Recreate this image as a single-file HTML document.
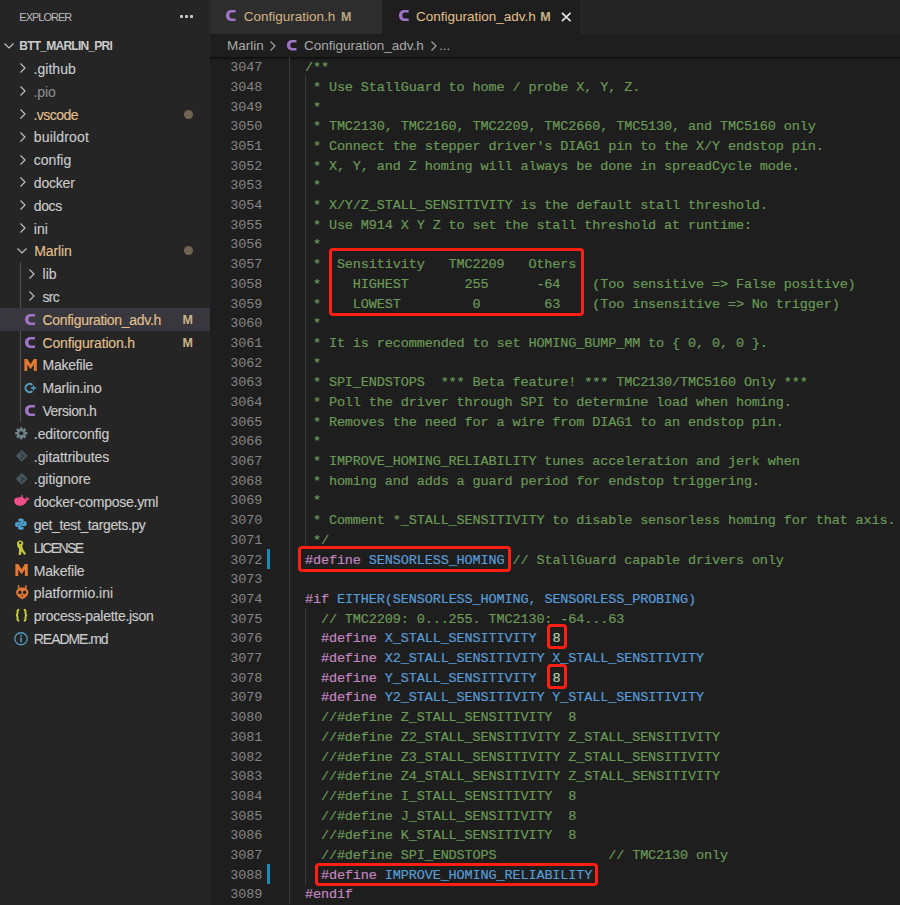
<!DOCTYPE html>
<html><head><meta charset="utf-8"><style>
html,body{margin:0;padding:0;}
body{width:900px;height:905px;overflow:hidden;background:#1e1e1e;position:relative;font-family:"Liberation Sans",sans-serif;}
.sb{position:absolute;left:0;top:0;width:210px;height:905px;background:#252526;overflow:hidden;}
.st{position:absolute;white-space:pre;font-size:14px;-webkit-text-stroke:0.12px currentColor;}
.ic{position:absolute;overflow:visible;}
.ci{position:absolute;width:12px;height:18px;line-height:18px;font-size:14px;font-weight:bold;color:#a074c4;text-align:center;}
.ji{position:absolute;width:14px;height:18px;line-height:18px;font-size:12.5px;font-weight:bold;color:#cbcb41;text-align:center;white-space:pre;}
.sel{position:absolute;left:0;width:210px;background:#37373d;}
.dot{position:absolute;left:183.8px;width:9px;height:9px;border-radius:50%;background:#716552;}
.mm{position:absolute;left:182.6px;font-size:12.5px;font-weight:bold;color:#cdb287;padding-top:1px;}
.tg{position:absolute;left:19.5px;width:1.4px;background:#505050;}
.hdr{position:absolute;left:19.3px;top:11px;font-size:11px;line-height:12px;color:#bbbbbb;letter-spacing:-1.0px;}
.root{position:absolute;left:19.3px;top:34.20px;height:22.80px;line-height:22.80px;font-size:12px;font-weight:bold;color:#cccccc;letter-spacing:-0.76px;padding-top:1px;}
.tabs{position:absolute;left:210px;top:0;width:690px;height:34px;background:#252526;}
.tab{position:absolute;top:0;height:34px;}
.tt{position:absolute;top:0;height:34px;line-height:34px;font-size:13.5px;white-space:pre;}
.bc{position:absolute;left:210px;top:34px;width:690px;height:23px;background:#1e1e1e;}
.bct{position:absolute;top:0;height:23px;line-height:23px;font-size:13.5px;color:#a9a9a9;white-space:pre;}
.shadow{position:absolute;left:210px;top:56.5px;width:690px;height:3px;background:linear-gradient(#0d0d0d,rgba(0,0,0,0));}
.ed{position:absolute;left:210px;top:57px;width:690px;height:848px;background:#1e1e1e;}
.ln{position:absolute;left:210px;width:52.2px;text-align:right;height:19.695px;line-height:19.695px;font-family:"Liberation Mono",monospace;font-size:13.5px;letter-spacing:-0.121px;color:#858585;white-space:pre;}
.cl{position:absolute;left:289.0px;height:19.695px;line-height:19.695px;font-family:"Liberation Mono",monospace;font-size:13.5px;letter-spacing:-0.121px;color:#d4d4d4;white-space:pre;-webkit-text-stroke:0.2px currentColor;}
.ig{position:absolute;width:1px;}
.gg{position:absolute;left:267px;width:3px;background:#1a8ab5;}
.rb{position:absolute;box-sizing:border-box;border:3.6px solid #ff1e12;border-radius:4px;}
</style></head><body>
<div class="sb">
<div class="hdr">EXPLORER</div>
<div style="position:absolute;left:179.9px;top:15px;width:2.8px;height:3px;border-radius:0.8px;background:#c5c5c5"></div>
<div style="position:absolute;left:185.1px;top:15px;width:2.8px;height:3px;border-radius:0.8px;background:#c5c5c5"></div>
<div style="position:absolute;left:190.35px;top:15px;width:2.8px;height:3px;border-radius:0.8px;background:#c5c5c5"></div>
<svg class="ic" style="left:2.5px;top:39.6px" width="12" height="12" viewBox="0 0 12 12"><path d="M1.5 3.5 L6 8 L10.5 3.5" fill="none" stroke="#c5c5c5" stroke-width="1.1"/></svg>
<div class="root">BTT_MARLIN_PRI</div>
<div class="tg" style="top:262.20px;height:159.60px"></div>
<svg class="ic" style="left:17px;top:62.400000000000006px" width="12" height="12" viewBox="0 0 12 12"><path d="M3.5 1.5 L8 6 L3.5 10.5" fill="none" stroke="#c5c5c5" stroke-width="1.1"/></svg><div class="st" style="left:33.5px;top:58.00px;height:22.80px;line-height:22.80px;color:#cccccc;letter-spacing:0.038px">.github</div><svg class="ic" style="left:17px;top:85.20000000000002px" width="12" height="12" viewBox="0 0 12 12"><path d="M3.5 1.5 L8 6 L3.5 10.5" fill="none" stroke="#c5c5c5" stroke-width="1.1"/></svg><div class="st" style="left:33.5px;top:80.80px;height:22.80px;line-height:22.80px;color:#8c8c8c;letter-spacing:-0.068px">.pio</div><svg class="ic" style="left:17px;top:108.00000000000001px" width="12" height="12" viewBox="0 0 12 12"><path d="M3.5 1.5 L8 6 L3.5 10.5" fill="none" stroke="#c5c5c5" stroke-width="1.1"/></svg><div class="st" style="left:33.5px;top:103.60px;height:22.80px;line-height:22.80px;color:#e2c08d;letter-spacing:-0.535px">.vscode</div><div class="dot" style="top:109.50px"></div><svg class="ic" style="left:17px;top:130.8px" width="12" height="12" viewBox="0 0 12 12"><path d="M3.5 1.5 L8 6 L3.5 10.5" fill="none" stroke="#c5c5c5" stroke-width="1.1"/></svg><div class="st" style="left:33.8px;top:126.40px;height:22.80px;line-height:22.80px;color:#cccccc;letter-spacing:0.177px">buildroot</div><svg class="ic" style="left:17px;top:153.6px" width="12" height="12" viewBox="0 0 12 12"><path d="M3.5 1.5 L8 6 L3.5 10.5" fill="none" stroke="#c5c5c5" stroke-width="1.1"/></svg><div class="st" style="left:33.8px;top:149.20px;height:22.80px;line-height:22.80px;color:#cccccc;letter-spacing:0.007px">config</div><svg class="ic" style="left:17px;top:176.4px" width="12" height="12" viewBox="0 0 12 12"><path d="M3.5 1.5 L8 6 L3.5 10.5" fill="none" stroke="#c5c5c5" stroke-width="1.1"/></svg><div class="st" style="left:33.8px;top:172.00px;height:22.80px;line-height:22.80px;color:#cccccc;letter-spacing:-0.187px">docker</div><svg class="ic" style="left:17px;top:199.20000000000002px" width="12" height="12" viewBox="0 0 12 12"><path d="M3.5 1.5 L8 6 L3.5 10.5" fill="none" stroke="#c5c5c5" stroke-width="1.1"/></svg><div class="st" style="left:33.8px;top:194.80px;height:22.80px;line-height:22.80px;color:#cccccc;letter-spacing:-0.393px">docs</div><svg class="ic" style="left:17px;top:222.00000000000003px" width="12" height="12" viewBox="0 0 12 12"><path d="M3.5 1.5 L8 6 L3.5 10.5" fill="none" stroke="#c5c5c5" stroke-width="1.1"/></svg><div class="st" style="left:33.8px;top:217.60px;height:22.80px;line-height:22.80px;color:#cccccc;letter-spacing:-0.002px">ini</div><svg class="ic" style="left:16px;top:244.80000000000004px" width="12" height="12" viewBox="0 0 12 12"><path d="M1.5 3.5 L6 8 L10.5 3.5" fill="none" stroke="#c5c5c5" stroke-width="1.1"/></svg><div class="st" style="left:34.3px;top:240.40px;height:22.80px;line-height:22.80px;color:#e2c08d;letter-spacing:-0.120px">Marlin</div><div class="dot" style="top:246.30px"></div><svg class="ic" style="left:25.5px;top:267.59999999999997px" width="12" height="12" viewBox="0 0 12 12"><path d="M3.5 1.5 L8 6 L3.5 10.5" fill="none" stroke="#c5c5c5" stroke-width="1.1"/></svg><div class="st" style="left:42.5px;top:263.20px;height:22.80px;line-height:22.80px;color:#cccccc;letter-spacing:0.064px">lib</div><svg class="ic" style="left:25.5px;top:290.4px" width="12" height="12" viewBox="0 0 12 12"><path d="M3.5 1.5 L8 6 L3.5 10.5" fill="none" stroke="#c5c5c5" stroke-width="1.1"/></svg><div class="st" style="left:42.5px;top:286.00px;height:22.80px;line-height:22.80px;color:#cccccc;letter-spacing:-0.721px">src</div><div class="sel" style="top:307.80px;height:22.80px"></div><svg class="ic" style="left:24.9px;top:313.8px" width="10" height="11" viewBox="0 0 10 11" preserveAspectRatio="none"><path d="M10 0 H5.4 C2.1 0 0 2.3 0 5.5 C0 8.7 2.1 11 5.4 11 H10 V8.45 H5.9 C4.3 8.45 3.5 7.3 3.5 5.5 C3.5 3.7 4.3 2.55 5.9 2.55 H10 Z" fill="#a074c4"/></svg><div class="st" style="left:42.5px;top:308.80px;height:22.80px;line-height:22.80px;color:#e2c08d;letter-spacing:-0.304px">Configuration_adv.h</div><div class="mm" style="top:307.80px;height:22.80px;line-height:22.80px">M</div><svg class="ic" style="left:24.9px;top:336.6px" width="10" height="11" viewBox="0 0 10 11" preserveAspectRatio="none"><path d="M10 0 H5.4 C2.1 0 0 2.3 0 5.5 C0 8.7 2.1 11 5.4 11 H10 V8.45 H5.9 C4.3 8.45 3.5 7.3 3.5 5.5 C3.5 3.7 4.3 2.55 5.9 2.55 H10 Z" fill="#a074c4"/></svg><div class="st" style="left:42.5px;top:331.60px;height:22.80px;line-height:22.80px;color:#e2c08d;letter-spacing:-0.170px">Configuration.h</div><div class="mm" style="top:330.60px;height:22.80px;line-height:22.80px">M</div><svg class="ic" style="left:23.8px;top:358.59999999999997px" width="13.2" height="12" viewBox="0 0 13 12"><path d="M0.3 12 V0 H3.3 L6.5 5.2 L9.7 0 H12.7 V12 H9.8 V5.6 L6.5 10.2 L3.2 5.6 V12 Z" fill="#e37933"/></svg><div class="st" style="left:42.5px;top:354.40px;height:22.80px;line-height:22.80px;color:#cccccc;letter-spacing:-0.216px">Makefile</div><svg class="ic" style="left:24px;top:381.59999999999997px" width="13" height="12" viewBox="0 0 13 12"><path d="M8.3 2.9 A4.1 4.1 0 1 0 8.3 9.1" fill="none" stroke="#519aba" stroke-width="2.1"/><path d="M6.8 6 H12.2 M9.5 3.4 V8.6" stroke="#519aba" stroke-width="1.5"/></svg><div class="st" style="left:42.5px;top:377.20px;height:22.80px;line-height:22.80px;color:#cccccc;letter-spacing:-0.169px">Marlin.ino</div><svg class="ic" style="left:24.9px;top:405.0px" width="10" height="11" viewBox="0 0 10 11" preserveAspectRatio="none"><path d="M10 0 H5.4 C2.1 0 0 2.3 0 5.5 C0 8.7 2.1 11 5.4 11 H10 V8.45 H5.9 C4.3 8.45 3.5 7.3 3.5 5.5 C3.5 3.7 4.3 2.55 5.9 2.55 H10 Z" fill="#a074c4"/></svg><div class="st" style="left:42.5px;top:400.00px;height:22.80px;line-height:22.80px;color:#cccccc;letter-spacing:-0.497px">Version.h</div><svg class="ic" style="left:15.2px;top:427.0px" width="12.5" height="12.5" viewBox="0 0 26 26"><g fill="#6f8389"><circle cx="13" cy="13" r="9.2"/><rect x="10.3" y="0.3" width="5.4" height="25.4" rx="0.8" transform="rotate(0 13 13)"/><rect x="10.3" y="0.3" width="5.4" height="25.4" rx="0.8" transform="rotate(45 13 13)"/><rect x="10.3" y="0.3" width="5.4" height="25.4" rx="0.8" transform="rotate(90 13 13)"/><rect x="10.3" y="0.3" width="5.4" height="25.4" rx="0.8" transform="rotate(135 13 13)"/></g><circle cx="13" cy="13" r="4.3" fill="#252526"/></svg><div class="st" style="left:33.8px;top:422.80px;height:22.80px;line-height:22.80px;color:#cccccc;letter-spacing:-0.059px">.editorconfig</div><svg class="ic" style="left:15.5px;top:450.2px" width="11.5" height="11.5" viewBox="0 0 24 24"><path d="M10.6 0.9 Q12 -0.4 13.4 0.9 L23.1 10.6 Q24.4 12 23.1 13.4 L13.4 23.1 Q12 24.4 10.6 23.1 L0.9 13.4 Q-0.4 12 0.9 10.6 Z" fill="#44565e"/><path d="M8 4.5 L12 8.5 V18 M12 8.5 L16 12.5" fill="none" stroke="#2a3236" stroke-width="1.8"/><circle cx="12" cy="17.5" r="2" fill="#2a3236"/><circle cx="16.3" cy="12.5" r="2" fill="#2a3236"/></svg><div class="st" style="left:33.8px;top:445.60px;height:22.80px;line-height:22.80px;color:#cccccc;letter-spacing:-0.054px">.gitattributes</div><svg class="ic" style="left:15.5px;top:472.99999999999994px" width="11.5" height="11.5" viewBox="0 0 24 24"><path d="M10.6 0.9 Q12 -0.4 13.4 0.9 L23.1 10.6 Q24.4 12 23.1 13.4 L13.4 23.1 Q12 24.4 10.6 23.1 L0.9 13.4 Q-0.4 12 0.9 10.6 Z" fill="#44565e"/><path d="M8 4.5 L12 8.5 V18 M12 8.5 L16 12.5" fill="none" stroke="#2a3236" stroke-width="1.8"/><circle cx="12" cy="17.5" r="2" fill="#2a3236"/><circle cx="16.3" cy="12.5" r="2" fill="#2a3236"/></svg><div class="st" style="left:33.8px;top:468.40px;height:22.80px;line-height:22.80px;color:#cccccc;letter-spacing:-0.059px">.gitignore</div><svg class="ic" style="left:13.9px;top:495.4px" width="16" height="11" viewBox="0 0 16 11"><path d="M0.2 4.6 C0.8 3 2.5 2.6 4 2.8 C5 1.8 6.2 2 7.2 2.4 L7.6 0 H8.6 L8.9 2.6 C10 3.2 11 4 12 4.4 L12.4 1.8 C13.4 2.2 13.8 3 13.8 3.4 L15.9 3.6 C15.6 4.4 14.6 5.2 13.2 5.2 C12.4 8.6 9.2 10.8 5.6 10.8 C2.6 10.8 0.6 9 0.2 6.6 Z" fill="#ee4f86"/></svg><div class="st" style="left:33.8px;top:491.20px;height:22.80px;line-height:22.80px;color:#cccccc;letter-spacing:-0.270px">docker-compose.yml</div><svg class="ic" style="left:15.3px;top:518.3px" width="11.8" height="12.2" viewBox="0 0 12 12"><path d="M6 0.2 C3 0.2 3.3 1.6 3.3 1.6 V3.3 H6.2 V4 H2 C2 4 0.1 3.8 0.1 6.3 C0.1 9 1.8 8.9 1.8 8.9 H2.9 V7.4 C2.9 7.4 2.8 5.8 4.5 5.8 H7.4 C7.4 5.8 8.9 5.8 8.9 4.3 V1.8 C8.9 1.8 9.1 0.2 6 0.2 Z" fill="#4ea0cf"/><path d="M6 11.8 C9 11.8 8.7 10.4 8.7 10.4 V8.7 H5.8 V8 H10 C10 8 11.9 8.2 11.9 5.7 C11.9 3 10.2 3.1 10.2 3.1 H9.1 V4.6 C9.1 4.6 9.2 6.2 7.5 6.2 H4.6 C4.6 6.2 3.1 6.2 3.1 7.7 V10.2 C3.1 10.2 2.9 11.8 6 11.8 Z" fill="#4ea0cf"/></svg><div class="st" style="left:33.8px;top:514.00px;height:22.80px;line-height:22.80px;color:#cccccc;letter-spacing:-0.393px">get_test_targets.py</div><svg class="ic" style="left:17px;top:539.6px" width="9.5" height="15.5" viewBox="0 0 10 16"><path d="M3.2 0.3 C5.3 0.3 6.6 1.4 6.6 3.2 C6.6 4.4 6 5.2 5.4 5.6 L6.4 9.6 L9.6 14.4 L7.6 15.7 L5 11.6 L4 15.7 H1.8 L2.2 9 C0.8 7.6 0 6 0 3.8 C0 1.6 1.2 0.3 3.2 0.3 Z" fill="#c5c83c"/><circle cx="3.4" cy="3" r="1.2" fill="#252526"/></svg><div class="st" style="left:33.8px;top:536.80px;height:22.80px;line-height:22.80px;color:#cccccc;letter-spacing:-1.587px">LICENSE</div><svg class="ic" style="left:14.8px;top:563.8px" width="13.2" height="12" viewBox="0 0 13 12"><path d="M0.3 12 V0 H3.3 L6.5 5.2 L9.7 0 H12.7 V12 H9.8 V5.6 L6.5 10.2 L3.2 5.6 V12 Z" fill="#e37933"/></svg><div class="st" style="left:33.8px;top:559.60px;height:22.80px;line-height:22.80px;color:#cccccc;letter-spacing:-0.191px">Makefile</div><svg class="ic" style="left:15.6px;top:584.7px" width="12.5" height="14.5" viewBox="0 0 12.5 14.5"><path d="M2.6 0.2 V3.4 M9.9 0.2 V3.4" stroke="#e37933" stroke-width="1.5"/><path d="M6.25 2.6 C9.6 2.6 12.4 4.6 12.4 7.6 C12.4 10.6 9.6 12.6 6.25 14.4 C2.9 12.6 0.1 10.6 0.1 7.6 C0.1 4.6 2.9 2.6 6.25 2.6 Z" fill="#e37933"/><ellipse cx="3.9" cy="7.4" rx="1.7" ry="1.8" fill="#252526"/><ellipse cx="8.6" cy="7.4" rx="1.7" ry="1.8" fill="#252526"/><path d="M6.25 9.6 V12.2" stroke="#252526" stroke-width="0.9"/></svg><div class="st" style="left:33.8px;top:582.40px;height:22.80px;line-height:22.80px;color:#cccccc;letter-spacing:-0.005px">platformio.ini</div><svg class="ic" style="left:15px;top:609.3000000000001px" width="13" height="12.5" viewBox="0 0 13 12.5"><path d="M4.2 0.8 C2.8 0.8 2.5 1.4 2.5 2.6 V4.6 C2.5 5.6 2 6.2 1 6.25 C2 6.3 2.5 6.9 2.5 7.9 V9.9 C2.5 11.1 2.8 11.7 4.2 11.7" fill="none" stroke="#cbcb41" stroke-width="1.9"/><path d="M8.8 0.8 C10.2 0.8 10.5 1.4 10.5 2.6 V4.6 C10.5 5.6 11 6.2 12 6.25 C11 6.3 10.5 6.9 10.5 7.9 V9.9 C10.5 11.1 10.2 11.7 8.8 11.7" fill="none" stroke="#cbcb41" stroke-width="1.9"/></svg><div class="st" style="left:33.8px;top:605.20px;height:22.80px;line-height:22.80px;color:#cccccc;letter-spacing:-0.274px">process-palette.json</div><svg class="ic" style="left:14.4px;top:631.6000000000001px" width="14" height="13.5" viewBox="0 0 14 13.5"><ellipse cx="7" cy="6.75" rx="6.2" ry="6" fill="none" stroke="#519aba" stroke-width="1.3"/><rect x="6.2" y="5.6" width="1.6" height="4.6" fill="#519aba"/><circle cx="7" cy="3.7" r="0.95" fill="#519aba"/></svg><div class="st" style="left:33.8px;top:628.00px;height:22.80px;line-height:22.80px;color:#cccccc;letter-spacing:-1.048px">README.md</div>
</div>
<div class="tabs">
 <div class="tab" style="left:0;width:172px;background:#2d2d2d">
  <svg class="ic" style="left:16.4px;top:9.7px" width="9.6" height="11" viewBox="0 0 10 11" preserveAspectRatio="none"><path d="M10 0 H5.4 C2.1 0 0 2.3 0 5.5 C0 8.7 2.1 11 5.4 11 H10 V8.45 H5.9 C4.3 8.45 3.5 7.3 3.5 5.5 C3.5 3.7 4.3 2.55 5.9 2.55 H10 Z" fill="#a074c4"/></svg>
  <div class="tt" style="left:33.8px;color:#e2c08d;opacity:0.9">Configuration.h</div>
  <div class="tt" style="left:131px;top:-0.5px;color:#c9b38a;opacity:0.9;font-size:12.5px;font-weight:bold">M</div>
 </div>
 <div class="tab" style="left:172px;width:198px;background:#1e1e1e">
  <svg class="ic" style="left:16.6px;top:9.7px" width="9.6" height="11" viewBox="0 0 10 11" preserveAspectRatio="none"><path d="M10 0 H5.4 C2.1 0 0 2.3 0 5.5 C0 8.7 2.1 11 5.4 11 H10 V8.45 H5.9 C4.3 8.45 3.5 7.3 3.5 5.5 C3.5 3.7 4.3 2.55 5.9 2.55 H10 Z" fill="#a074c4"/></svg>
  <div class="tt" style="left:34px;color:#e2c08d">Configuration_adv.h</div>
  <div class="tt" style="left:158.2px;top:-0.5px;color:#c9b38a;font-size:12.5px;font-weight:bold">M</div>
  <svg class="ic" style="left:178.6px;top:11.7px" width="10.5" height="10" viewBox="0 0 10.5 10"><path d="M0.9 0.9 L9.6 9.1 M9.6 0.9 L0.9 9.1" stroke="#e6e6e6" stroke-width="1.6"/></svg>
 </div>
</div>
<div class="bc">
 <div class="bct" style="left:17px">Marlin</div>
 <svg class="ic" style="left:57px;top:5.5px" width="12" height="12" viewBox="0 0 12 12"><path d="M3.5 1.5 L8 6 L3.5 10.5" fill="none" stroke="#a9a9a9" stroke-width="1.1"/></svg>
 <svg class="ic" style="left:76.9px;top:6.3px" width="9.4" height="10.4" viewBox="0 0 10 11" preserveAspectRatio="none"><path d="M10 0 H5.4 C2.1 0 0 2.3 0 5.5 C0 8.7 2.1 11 5.4 11 H10 V8.45 H5.9 C4.3 8.45 3.5 7.3 3.5 5.5 C3.5 3.7 4.3 2.55 5.9 2.55 H10 Z" fill="#a074c4"/></svg>
 <div class="bct" style="left:94px">Configuration_adv.h</div>
 <svg class="ic" style="left:218px;top:5.5px" width="12" height="12" viewBox="0 0 12 12"><path d="M3.5 1.5 L8 6 L3.5 10.5" fill="none" stroke="#a9a9a9" stroke-width="1.1"/></svg>
 <div class="bct" style="left:229px">...</div>
</div>
<div class="ed"></div>
<div class="shadow"></div>
<div class="ig" style="left:289px;top:56.70px;height:846.88px;background:#3b3b3b"></div><div class="ig" style="left:305px;top:76.40px;height:472.68px;background:#3b3b3b"></div><div class="ig" style="left:305px;top:608.16px;height:275.73px;background:#3b3b3b"></div>
<div class="gg" style="top:549.08px;height:19.70px"></div><div class="gg" style="top:864.20px;height:19.70px"></div>
<div class="ln" style="top:58.20px">3047</div><div class="cl" style="top:58.20px">  <span style="color:#6a9955">/**</span></div><div class="ln" style="top:77.90px">3048</div><div class="cl" style="top:77.90px"><span style="color:#6a9955">   * Use StallGuard to home / probe X, Y, Z.</span></div><div class="ln" style="top:97.59px">3049</div><div class="cl" style="top:97.59px"><span style="color:#6a9955">   *</span></div><div class="ln" style="top:117.28px">3050</div><div class="cl" style="top:117.28px"><span style="color:#6a9955">   * TMC2130, TMC2160, TMC2209, TMC2660, TMC5130, and TMC5160 only</span></div><div class="ln" style="top:136.98px">3051</div><div class="cl" style="top:136.98px"><span style="color:#6a9955">   * Connect the stepper driver&#x27;s DIAG1 pin to the X/Y endstop pin.</span></div><div class="ln" style="top:156.68px">3052</div><div class="cl" style="top:156.68px"><span style="color:#6a9955">   * X, Y, and Z homing will always be done in spreadCycle mode.</span></div><div class="ln" style="top:176.37px">3053</div><div class="cl" style="top:176.37px"><span style="color:#6a9955">   *</span></div><div class="ln" style="top:196.06px">3054</div><div class="cl" style="top:196.06px"><span style="color:#6a9955">   * X/Y/Z_STALL_SENSITIVITY is the default stall threshold.</span></div><div class="ln" style="top:215.76px">3055</div><div class="cl" style="top:215.76px"><span style="color:#6a9955">   * Use M914 X Y Z to set the stall threshold at runtime:</span></div><div class="ln" style="top:235.45px">3056</div><div class="cl" style="top:235.45px"><span style="color:#6a9955">   *</span></div><div class="ln" style="top:255.15px">3057</div><div class="cl" style="top:255.15px"><span style="color:#6a9955">   *  Sensitivity   TMC2209   Others</span></div><div class="ln" style="top:274.85px">3058</div><div class="cl" style="top:274.85px"><span style="color:#6a9955">   *    HIGHEST       255      -64    (Too sensitive =&gt; False positive)</span></div><div class="ln" style="top:294.54px">3059</div><div class="cl" style="top:294.54px"><span style="color:#6a9955">   *    LOWEST         0        63    (Too insensitive =&gt; No trigger)</span></div><div class="ln" style="top:314.24px">3060</div><div class="cl" style="top:314.24px"><span style="color:#6a9955">   *</span></div><div class="ln" style="top:333.93px">3061</div><div class="cl" style="top:333.93px"><span style="color:#6a9955">   * It is recommended to set HOMING_BUMP_MM to { 0, 0, 0 }.</span></div><div class="ln" style="top:353.62px">3062</div><div class="cl" style="top:353.62px"><span style="color:#6a9955">   *</span></div><div class="ln" style="top:373.32px">3063</div><div class="cl" style="top:373.32px"><span style="color:#6a9955">   * SPI_ENDSTOPS  *** Beta feature! *** TMC2130/TMC5160 Only ***</span></div><div class="ln" style="top:393.01px">3064</div><div class="cl" style="top:393.01px"><span style="color:#6a9955">   * Poll the driver through SPI to determine load when homing.</span></div><div class="ln" style="top:412.71px">3065</div><div class="cl" style="top:412.71px"><span style="color:#6a9955">   * Removes the need for a wire from DIAG1 to an endstop pin.</span></div><div class="ln" style="top:432.40px">3066</div><div class="cl" style="top:432.40px"><span style="color:#6a9955">   *</span></div><div class="ln" style="top:452.10px">3067</div><div class="cl" style="top:452.10px"><span style="color:#6a9955">   * IMPROVE_HOMING_RELIABILITY tunes acceleration and jerk when</span></div><div class="ln" style="top:471.80px">3068</div><div class="cl" style="top:471.80px"><span style="color:#6a9955">   * homing and adds a guard period for endstop triggering.</span></div><div class="ln" style="top:491.49px">3069</div><div class="cl" style="top:491.49px"><span style="color:#6a9955">   *</span></div><div class="ln" style="top:511.19px">3070</div><div class="cl" style="top:511.19px"><span style="color:#6a9955">   * Comment *_STALL_SENSITIVITY to disable sensorless homing for that axis.</span></div><div class="ln" style="top:530.88px">3071</div><div class="cl" style="top:530.88px"><span style="color:#6a9955">   */</span></div><div class="ln" style="top:550.58px">3072</div><div class="cl" style="top:550.58px">  <span style="color:#c586c0">#define</span> <span style="color:#569cd6">SENSORLESS_HOMING</span> <span style="color:#6a9955">// StallGuard capable drivers only</span></div><div class="ln" style="top:570.27px">3073</div><div class="cl" style="top:570.27px"></div><div class="ln" style="top:589.97px">3074</div><div class="cl" style="top:589.97px">  <span style="color:#c586c0">#if</span> <span style="color:#569cd6">EITHER(SENSORLESS_HOMING, SENSORLESS_PROBING)</span></div><div class="ln" style="top:609.66px">3075</div><div class="cl" style="top:609.66px"><span style="color:#6a9955">    // TMC2209: 0...255. TMC2130: -64...63</span></div><div class="ln" style="top:629.36px">3076</div><div class="cl" style="top:629.36px">    <span style="color:#c586c0">#define</span> <span style="color:#569cd6">X_STALL_SENSITIVITY</span>  <span style="color:#b5cea8">8</span></div><div class="ln" style="top:649.05px">3077</div><div class="cl" style="top:649.05px">    <span style="color:#c586c0">#define</span> <span style="color:#569cd6">X2_STALL_SENSITIVITY X_STALL_SENSITIVITY</span></div><div class="ln" style="top:668.75px">3078</div><div class="cl" style="top:668.75px">    <span style="color:#c586c0">#define</span> <span style="color:#569cd6">Y_STALL_SENSITIVITY</span>  <span style="color:#b5cea8">8</span></div><div class="ln" style="top:688.44px">3079</div><div class="cl" style="top:688.44px">    <span style="color:#c586c0">#define</span> <span style="color:#569cd6">Y2_STALL_SENSITIVITY Y_STALL_SENSITIVITY</span></div><div class="ln" style="top:708.14px">3080</div><div class="cl" style="top:708.14px"><span style="color:#6a9955">    //#define Z_STALL_SENSITIVITY  8</span></div><div class="ln" style="top:727.83px">3081</div><div class="cl" style="top:727.83px"><span style="color:#6a9955">    //#define Z2_STALL_SENSITIVITY Z_STALL_SENSITIVITY</span></div><div class="ln" style="top:747.53px">3082</div><div class="cl" style="top:747.53px"><span style="color:#6a9955">    //#define Z3_STALL_SENSITIVITY Z_STALL_SENSITIVITY</span></div><div class="ln" style="top:767.22px">3083</div><div class="cl" style="top:767.22px"><span style="color:#6a9955">    //#define Z4_STALL_SENSITIVITY Z_STALL_SENSITIVITY</span></div><div class="ln" style="top:786.92px">3084</div><div class="cl" style="top:786.92px"><span style="color:#6a9955">    //#define I_STALL_SENSITIVITY  8</span></div><div class="ln" style="top:806.61px">3085</div><div class="cl" style="top:806.61px"><span style="color:#6a9955">    //#define J_STALL_SENSITIVITY  8</span></div><div class="ln" style="top:826.31px">3086</div><div class="cl" style="top:826.31px"><span style="color:#6a9955">    //#define K_STALL_SENSITIVITY  8</span></div><div class="ln" style="top:846.00px">3087</div><div class="cl" style="top:846.00px"><span style="color:#6a9955">    //#define SPI_ENDSTOPS              // TMC2130 only</span></div><div class="ln" style="top:865.70px">3088</div><div class="cl" style="top:865.70px">    <span style="color:#c586c0">#define</span> <span style="color:#569cd6">IMPROVE_HOMING_RELIABILITY</span></div><div class="ln" style="top:885.39px">3089</div><div class="cl" style="top:885.39px">  <span style="color:#c586c0">#endif</span></div>
<div class="rb" style="left:329.3px;top:247.8px;width:254.4px;height:68.2px"></div><div class="rb" style="left:297.6px;top:546.0px;width:213.5px;height:25.8px"></div><div class="rb" style="left:547.1px;top:624.4px;width:20.0px;height:24.5px"></div><div class="rb" style="left:547.1px;top:664.4px;width:20.0px;height:24.5px"></div><div class="rb" style="left:315.1px;top:862.6px;width:283.1px;height:23.1px"></div>
</body></html>
